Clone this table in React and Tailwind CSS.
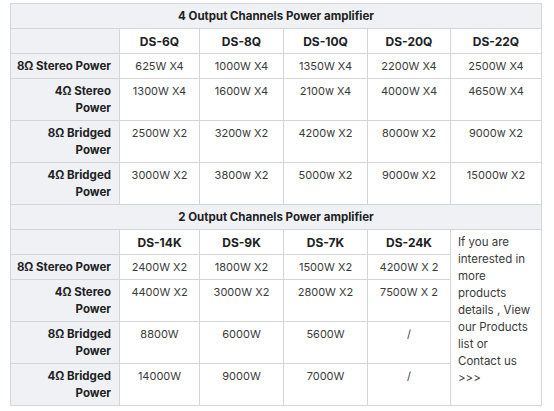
import React from 'react';

const font = { fontFamily: 'Inter, "Noto Sans", sans-serif' };

const rowsTop = [
  { label: ['8Ω Stereo Power'], vals: ['625W X4', '1000W X4', '1350W X4', '2200W X4', '2500W X4'] },
  { label: ['4Ω Stereo', 'Power'], vals: ['1300W X4', '1600W X4', '2100w X4', '4000W X4', '4650W X4'] },
  { label: ['8Ω Bridged', 'Power'], vals: ['2500W X2', '3200w X2', '4200w X2', '8000w X2', '9000w X2'] },
  { label: ['4Ω Bridged', 'Power'], vals: ['3000W X2', '3800w X2', '5000w X2', '9000w X2', '15000w X2'] },
];

const rowsBottom = [
  { label: ['8Ω Stereo Power'], vals: ['2400W X2', '1800W X2', '1500W X2', '4200W X 2'] },
  { label: ['4Ω Stereo', 'Power'], vals: ['4400W X2', '3000W X2', '2800W X2', '7500W X 2'] },
  { label: ['8Ω Bridged', 'Power'], vals: ['8800W', '6000W', '5600W', '/'] },
  { label: ['4Ω Bridged', 'Power'], vals: ['14000W', '9000W', '7000W', '/'] },
];

const contactLines = ['If you are', 'interested in', 'more', 'products', 'details , View', 'our Products', 'list or', 'Contact us', '>>>'];

const th = 'border border-[#d4d5d8] bg-[#f0f1f5] text-[#202122] font-bold leading-[17px] pt-[4px] pb-[3px]';
const td = 'border border-[#d4d5d8] bg-white text-[#3a3a3a] text-[11px] leading-[17px] pt-[4px] pb-[3px] px-1 text-center align-top whitespace-nowrap';

const RowHead = ({ label }) => (
  <th className={`${th} text-[11.5px] text-right align-top pr-[8px] pl-0 whitespace-nowrap`}>
    {label.map((l, i) => (
      <div key={i}>{l}</div>
    ))}
  </th>
);

export default function App() {
  return (
    <div className="w-[554px] h-[411px] bg-white pt-[3px] pl-[10px]" style={font}>
      <table className="border-collapse table-fixed w-[531px]">
        <colgroup>
          <col className="w-[109px]" />
          <col className="w-[80px]" />
          <col className="w-[84px]" />
          <col className="w-[84px]" />
          <col className="w-[83px]" />
          <col className="w-[91px]" />
        </colgroup>
        <tbody>
          <tr>
            <th colSpan={6} className={`${th} text-[11.5px] text-center`}>4 Output Channels Power amplifier</th>
          </tr>
          <tr>
            <th className={th}></th>
            {['DS-6Q', 'DS-8Q', 'DS-10Q', 'DS-20Q', 'DS-22Q'].map(m => (
              <th key={m} className={`${th} text-[12px] bg-white text-center`}>{m}</th>
            ))}
          </tr>
          {rowsTop.map((r, i) => (
            <tr key={i}>
              <RowHead label={r.label} />
              {r.vals.map((v, j) => (
                <td key={j} className={td}>{v}</td>
              ))}
            </tr>
          ))}

          <tr>
            <th colSpan={6} className={`${th} text-[11.5px] text-center`}>2 Output Channels Power amplifier</th>
          </tr>
          <tr>
            <th className={th}></th>
            {['DS-14K', 'DS-9K', 'DS-7K', 'DS-24K'].map(m => (
              <th key={m} className={`${th} text-[12px] bg-white text-center`}>{m}</th>
            ))}
            <td rowSpan={5} className="border border-[#d4d5d8] bg-white text-[#3a3a3a] text-[11.5px] leading-[17px] pt-[4px] pb-[3px] pl-[7px] pr-[4px] text-left align-top whitespace-nowrap">
              {contactLines.map((l, i) => (
                <div key={i}>{l}</div>
              ))}
            </td>
          </tr>
          {rowsBottom.map((r, i) => (
            <tr key={i}>
              <RowHead label={r.label} />
              {r.vals.map((v, j) => (
                <td key={j} className={td}>{v}</td>
              ))}
            </tr>
          ))}
        </tbody>
      </table>
    </div>
  );
}
